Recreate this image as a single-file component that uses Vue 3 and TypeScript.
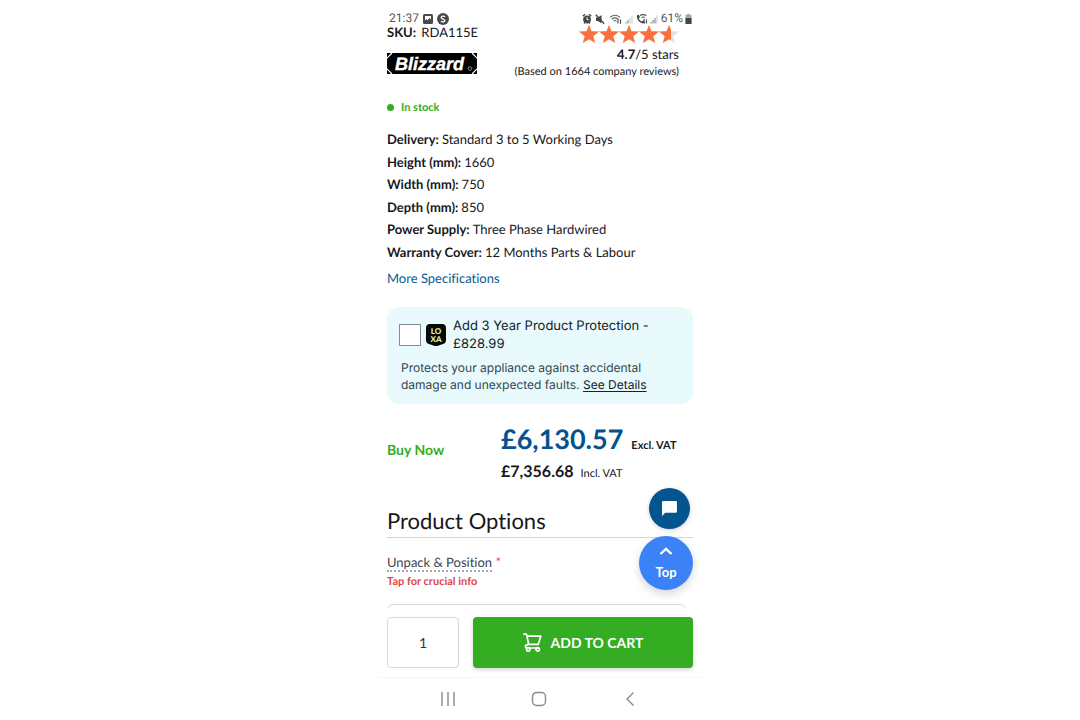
<script setup lang="ts">
import { ref } from 'vue'

interface Spec {
  label: string
  value: string
}

const specs: Spec[] = [
  { label: 'Delivery:', value: 'Standard 3 to 5 Working Days' },
  { label: 'Height (mm):', value: '1660' },
  { label: 'Width (mm):', value: '750' },
  { label: 'Depth (mm):', value: '850' },
  { label: 'Power Supply:', value: 'Three Phase Hardwired' },
  { label: 'Warranty Cover:', value: '12 Months Parts & Labour' },
]

const starFills: number[] = [1, 1, 1, 1, 0.6]
const starPath = 'M10 0l2.5 6.2 7.5.4-5.800 4.600 2 6.800L10 14.200l-6.200 3.800 2-6.800L0 6.600l7.500-.4z'

const quantity = ref('1')
const protection = ref(false)
</script>

<template>
  <div class="phone">
    <header class="status">
      <div class="status-group">
        <span class="clock">21:37</span>
        <svg class="notif" viewBox="0 0 12 12" aria-hidden="true">
          <rect x="1" y="1" width="10" height="10" rx="1.5" fill="#4a4a4a" />
          <path d="M3 3h6v3.500L7.500 5 5.500 7.200 4.500 6 3 7.500z" fill="#fff" />
        </svg>
        <svg class="notif" viewBox="0 0 12 12" aria-hidden="true">
          <circle cx="6" cy="6" r="6" fill="#4a4a4a" />
          <path d="M8 3.800C7 2.600 4.200 2.800 4.200 4.500S7.900 5.900 7.900 7.600 5 9.400 4 8.100" fill="none" stroke="#fff" stroke-width="1.300" />
        </svg>
      </div>
      <div class="status-group">
        <svg class="sys" viewBox="0 0 77 12" aria-hidden="true">
          <g fill="none" stroke="#444">
            <circle cx="5" cy="6.500" r="3.300" fill="#444" stroke-width="1.200" />
            <path d="M.8 3.200L3 1.300M9.200 3.200L7 1.300M2 10.500l1-1M8 10.500l-1-1" stroke-width="1.400" />
            <path d="M5 4.300v2.400h1.700" stroke="#fff" />
          </g>
          <path d="M14 4.500h2L19.500 2v8.500L16 8h-2z" fill="#444" />
          <path d="M13.800 1.800l8.400 8.900" stroke="#444" stroke-width="1.300" />
          <g fill="none" stroke="#666" stroke-width="1.100">
            <path d="M28 4.200q5-4 10 0M29.800 6.200q3.200-2.600 6.400 0M31.500 8.100q1.500-1.200 3 0" />
            <path d="M36 6v4.500M38.500 10.800V6.500" stroke="#444" />
          </g>
          <path d="M44 10.500V9M46 10.500V7" stroke="#777" />
          <path d="M48 10.500V5M50 10.500V2.500" stroke="#c4c4c4" />
          <path d="M55 2.300l1.800-.5 1.200 2.400-1.200 1c.6 1.700 1.600 2.700 3.200 3.300l1-1.100 2.200 1.200-.5 1.800C58.500 11 54.300 7 55 2.300z" fill="#444" />
          <path d="M58 2.600q3.200-2 6.400 0M59.500 4.600q1.700-1.200 3.400 0M62 6v2M64.500 6.500v4" fill="none" stroke="#555" stroke-width="1.200" />
          <path d="M69 10.500V9M71 10.500V7M73 10.500V5" stroke="#777" />
          <path d="M75 10.500V2.500" stroke="#c4c4c4" />
        </svg>
        <span class="percent">61%</span>
        <svg class="battery" viewBox="0 0 7 10" aria-hidden="true">
          <path d="M2 0h3v1h1.500v9h-6V1H2z" fill="#a8a8a8" />
          <path d="M.5 4h6v6h-6z" fill="#444" />
        </svg>
      </div>
    </header>

    <main class="screen">
      <section class="summary">
        <div>
          <p class="sku"><b>SKU:</b> RDA115E</p>
          <svg class="brand" viewBox="0 0 90 21" role="img" aria-label="Blizzard">
            <rect width="90" height="21" fill="#000" />
            <path d="M0 5L5 0M85 0l5 5M0 16l5 5M85 21l5-5" stroke="#fff" stroke-width="1.200" />
            <text x="8" y="17" class="brand-text">Blizzard</text>
            <circle cx="83" cy="15.500" r="1.800" fill="none" stroke="#bbb" stroke-width=".7" />
          </svg>
        </div>
        <div class="rating">
          <div class="stars" role="img" aria-label="4.7 out of 5 stars">
            <svg v-for="(fill, i) in starFills" :key="i" viewBox="0 0 20 18">
              <defs>
                <clipPath :id="`star-${i}`"><rect :width="20 * fill" height="18" /></clipPath>
              </defs>
              <path :d="starPath" fill="#eadfe0" />
              <path :d="starPath" fill="#f9703e" :clip-path="`url(#star-${i})`" />
            </svg>
          </div>
          <p class="score"><b>4.7</b>/5 stars</p>
          <p class="reviews">(Based on 1664 company reviews)</p>
        </div>
      </section>

      <p class="stock"><span class="dot"></span>In stock</p>

      <dl class="specs">
        <div v-for="spec in specs" :key="spec.label">
          <dt>{{ spec.label }}</dt>
          <dd>{{ spec.value }}</dd>
        </div>
      </dl>
      <a class="more" href="#">More Specifications</a>

      <section class="protect">
        <div class="protect-head">
          <input id="protection" v-model="protection" type="checkbox" />
          <svg class="loxa" viewBox="0 0 20 22" aria-hidden="true">
            <path d="M4 0h12q4 0 4 4v12q0 3-3 4l-5 1.700q-2 .5-4 0L3 20q-3-1-3-4V4q0-4 4-4z" fill="#050b08" />
            <text x="10" y="10" class="loxa-text">LO</text>
            <text x="10" y="18" class="loxa-text">XA</text>
          </svg>
          <label for="protection">Add 3 Year Product Protection - £828.99</label>
        </div>
        <p>Protects your appliance against accidental damage and unexpected faults. <a href="#">See Details</a></p>
      </section>

      <section class="buy">
        <h2>Buy Now</h2>
        <div>
          <p class="price"><strong>£6,130.57</strong><b>Excl. VAT</b></p>
          <p class="price-incl"><strong>£7,356.68</strong><span>Incl. VAT</span></p>
        </div>
      </section>

      <section class="options">
        <h1>Product Options</h1>
        <label class="option" for="unpack"><span class="option-name">Unpack &amp; Position</span> <span class="required">*</span></label>
        <p class="hint">Tap for crucial info</p>
        <select id="unpack"><option></option></select>
      </section>

      <div class="floating">
        <button class="chat" type="button" aria-label="Chat">
          <svg viewBox="0 0 16 16"><path d="M2 1h12q1 0 1 1v9q0 1-1 1H4l-3 3V2q0-1 1-1z" fill="#fff" /></svg>
        </button>
        <button class="top" type="button">
          <svg viewBox="0 0 14 8"><path d="M1.500 7L7 1.800 12.500 7" fill="none" stroke="#fff" stroke-width="2.400" /></svg>
          <span>Top</span>
        </button>
      </div>
    </main>

    <form class="cart" @submit.prevent>
      <input v-model="quantity" class="quantity" type="text" inputmode="numeric" aria-label="Quantity" />
      <button class="add" type="submit">
        <svg viewBox="0 0 20 20" aria-hidden="true">
          <g fill="none" stroke="#fff" stroke-width="1.800" stroke-linejoin="round" stroke-linecap="round">
            <path d="M1 1.200h2.700L6 12h10L18.800 3.200H4.200M6 12c-2.400.2-3.400 1-3.400 2.200 0 1 .8 1.600 2 1.600H16" />
            <circle cx="5.500" cy="17.200" r="1.800" />
            <circle cx="15.500" cy="17.200" r="1.800" />
          </g>
        </svg>
        ADD TO CART
      </button>
    </form>

    <nav class="system">
      <button type="button" aria-label="Recents">
        <svg viewBox="0 0 16 16"><path d="M2 1v14M8 1v14M14 1v14" /></svg>
      </button>
      <button type="button" aria-label="Home">
        <svg viewBox="0 0 16 16"><rect x="1.500" y="1.500" width="13" height="13" rx="4" /></svg>
      </button>
      <button type="button" aria-label="Back">
        <svg viewBox="0 0 16 16"><path d="M11.500 1.500L5 8l6.500 6.500" /></svg>
      </button>
    </nav>
  </div>
</template>

<style>
body {
  background: #fff;
}
</style>

<style scoped>
* {
  box-sizing: border-box;
}

.phone {
  display: flex;
  flex-direction: column;
  width: 100%;
  max-width: 324px;
  height: 100vh;
  margin: 0 auto;
  font-family: Lato, 'Liberation Sans', sans-serif;
  font-size: 13px;
  font-variant-ligatures: none;
  text-rendering: geometricPrecision;
  color: #17171c;
}

p,
h1,
h2,
dl,
dd {
  margin: 0;
}

button {
  padding: 0;
  border: 0;
  font-family: inherit;
  cursor: pointer;
}

.status {
  display: flex;
  justify-content: space-between;
  flex: none;
  height: 25px;
  padding: 12px 10px 0 11px;
  font-family: Roboto, sans-serif;
  font-size: 12px;
  line-height: 13px;
  color: #555;
}

.status-group {
  display: flex;
  align-items: center;
}

.notif {
  width: 12px;
  height: 12px;
  margin-left: 3px;
}

.sys {
  width: 77px;
  height: 12px;
  margin-right: 2px;
}

.battery {
  width: 7px;
  height: 10px;
  margin-left: 2px;
}

.screen {
  position: relative;
  flex: 1;
  min-height: 0;
  padding: 0 9px;
  overflow: hidden;
}

.summary {
  display: flex;
  justify-content: space-between;
  padding-right: 14px;
}

.sku {
  line-height: 14px;
}

.sku b {
  margin-right: 2px;
}

.brand {
  display: block;
  width: 90px;
  height: 21px;
  margin-top: 14px;
}

.brand-text {
  font: italic bold 18px 'Liberation Sans', sans-serif;
  fill: #fff;
  stroke: #fff;
  stroke-width: 0.4px;
}

.rating {
  text-align: right;
}

.stars {
  display: flex;
  justify-content: flex-end;
  height: 18px;
}

.stars svg {
  width: 20px;
  height: 18px;
}

.score {
  margin-top: 3px;
  line-height: 17px;
}

.reviews {
  font-size: 11px;
  line-height: 17px;
}

.stock {
  display: flex;
  align-items: center;
  gap: 7px;
  margin-top: 19px;
  font-size: 11px;
  font-weight: bold;
  line-height: 17px;
  color: #34ad23;
}

.dot {
  width: 7px;
  height: 7px;
  border-radius: 50%;
  background: #34ad23;
}

.specs {
  display: grid;
  grid-template-rows: repeat(6, 1fr);
  height: 135px;
  margin-top: 12px;
}

.specs div {
  display: flex;
  align-items: center;
  gap: 3px;
}

.specs dt {
  font-weight: bold;
}

.more {
  display: block;
  margin-top: 5px;
  line-height: 20px;
  color: #0b5a94;
  text-decoration: none;
}

.protect {
  margin-top: 19px;
  padding: 10px 12px 11px;
  border-radius: 12px;
  background: #e9fafc;
  font-family: Inter, sans-serif;
  font-size: 12px;
  line-height: 17px;
  color: #33454f;
}

.protect-head {
  display: flex;
  align-items: center;
  font-size: 13px;
  line-height: 18px;
  color: #14202b;
}

.protect-head input {
  flex: none;
  width: 22px;
  height: 22px;
  margin: 0 5px 0 0;
  appearance: none;
  border: 1px solid #858b95;
  background: #fff;
}

.protect-head input:checked {
  background: #0b5a94;
}

.loxa {
  flex: none;
  width: 20px;
  height: 22px;
  margin-right: 7px;
}

.loxa-text {
  font: 900 8px Lato, sans-serif;
  fill: #e4f5a8;
  text-anchor: middle;
}

.protect p {
  margin: 6px 0 0 2px;
}

.protect a {
  color: #14202b;
  text-underline-offset: 2px;
}

.buy {
  display: grid;
  grid-template-columns: 114px 1fr;
  align-items: start;
  margin-top: 19px;
}

.buy h2 {
  padding-top: 17px;
  font-size: 14px;
  line-height: 20px;
  color: #34ad23;
}

.price,
.price-incl {
  display: flex;
  align-items: baseline;
  font-size: 11px;
}

.price {
  gap: 8px;
  line-height: 32px;
}

.price strong {
  font-size: 27px;
  color: #04528f;
}

.price-incl {
  gap: 7px;
  line-height: 20px;
}

.price-incl strong {
  font-size: 16px;
}

.options {
  margin-top: 22px;
}

.options h1 {
  padding-bottom: 1px;
  border-bottom: 1px solid #d3d5da;
  font-size: 22px;
  font-weight: normal;
  line-height: 30px;
}

.option {
  display: block;
  margin-top: 16px;
  line-height: 16px;
  color: #3d4350;
}

.option-name {
  border-bottom: 2px dotted #a5a8b0;
}

.required {
  color: #e0474c;
}

.hint {
  margin-top: 4px;
  font-size: 11px;
  font-weight: bold;
  line-height: 15px;
  color: #e0474c;
}

.options select {
  display: block;
  width: calc(100% - 7px);
  height: 40px;
  margin-top: 15px;
  appearance: none;
  border: 1px solid #d8d8dc;
  border-radius: 6px;
  background: #fff;
}

.floating {
  position: absolute;
  right: 9px;
  bottom: 18px;
  display: flex;
  flex-direction: column;
  align-items: flex-end;
  gap: 7px;
}

.chat {
  display: grid;
  place-items: center;
  width: 41px;
  height: 41px;
  margin-right: 3px;
  border-radius: 50%;
  background: #03548f;
  box-shadow: 0 1px 4px rgb(0 0 0 / 20%);
}

.chat svg {
  width: 17px;
  height: 17px;
}

.top {
  display: flex;
  flex-direction: column;
  align-items: center;
  gap: 9px;
  width: 54px;
  height: 54px;
  padding-top: 11px;
  border-radius: 50%;
  background: #3b82f6;
  box-shadow: 0 4px 10px rgb(0 0 0 / 16%);
  font-size: 13px;
  font-weight: bold;
  line-height: 16px;
  color: #fff;
}

.top svg {
  flex: none;
  width: 14px;
  height: 8px;
}

.cart {
  display: flex;
  flex: none;
  gap: 14px;
  padding: 9px;
  border-bottom: 1px solid #f6f6f6;
}

.quantity {
  width: 72px;
  height: 51px;
  padding: 0;
  border: 1px solid #d9d9dd;
  border-radius: 4px;
  background: #fff;
  font: 14px Lato, sans-serif;
  color: #33363d;
  text-align: center;
}

.add {
  display: flex;
  flex: 1;
  align-items: center;
  justify-content: center;
  gap: 9px;
  height: 51px;
  border-radius: 4px;
  background: #34ad23;
  box-shadow: 0 2px 4px rgb(0 0 0 / 16%);
  font-size: 14px;
  font-weight: bold;
  text-rendering: inherit;
  color: #fff;
}

.add svg {
  width: 19px;
  height: 19px;
}

.system {
  display: flex;
  flex: none;
  justify-content: space-between;
  height: 42px;
  padding: 0 64px 0 62px;
}

.system button {
  display: grid;
  place-items: center;
  background: none;
}

.system svg {
  width: 16px;
  height: 16px;
  fill: none;
  stroke: #8a8a8a;
  stroke-width: 1.400;
}
</style>
